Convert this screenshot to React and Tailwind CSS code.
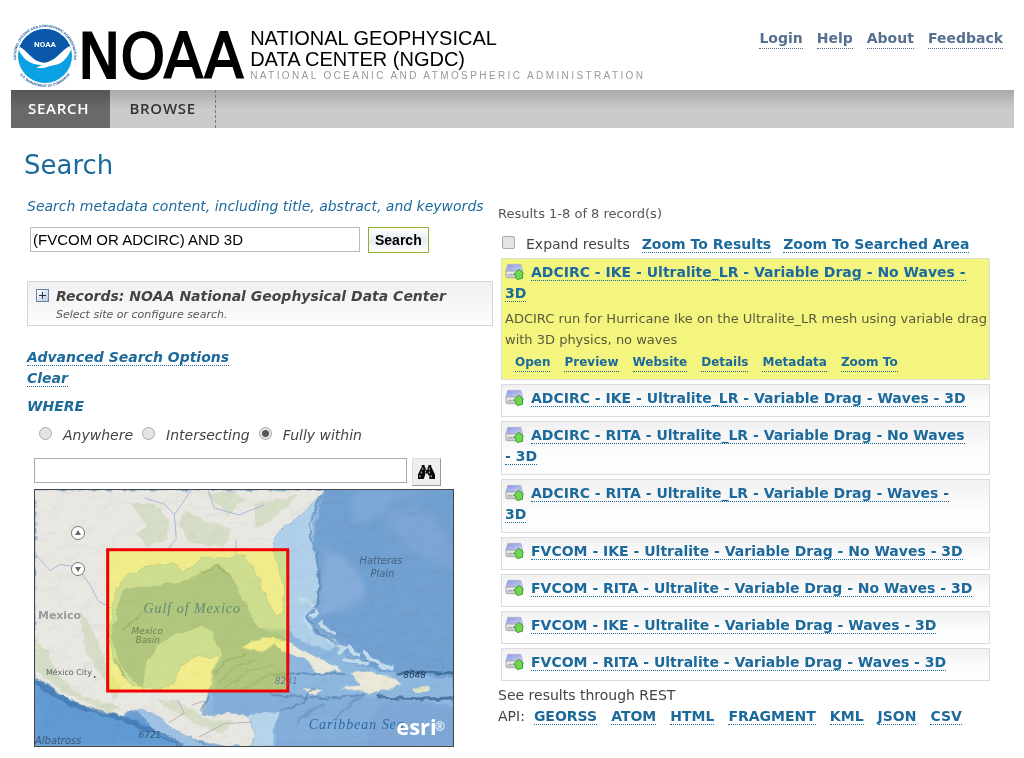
import React, { useState } from "react";

const results = [
  {
    title: "ADCIRC - IKE - Ultralite_LR - Variable Drag - No Waves - 3D",
    description:
      "ADCIRC run for Hurricane Ike on the Ultralite_LR mesh using variable drag with 3D physics, no waves",
    selected: true,
  },
  { title: "ADCIRC - IKE - Ultralite_LR - Variable Drag - Waves - 3D" },
  { title: "ADCIRC - RITA - Ultralite_LR - Variable Drag - No Waves - 3D" },
  { title: "ADCIRC - RITA - Ultralite_LR - Variable Drag - Waves - 3D" },
  { title: "FVCOM - IKE - Ultralite - Variable Drag - No Waves - 3D" },
  { title: "FVCOM - RITA - Ultralite - Variable Drag - No Waves - 3D" },
  { title: "FVCOM - IKE - Ultralite - Variable Drag - Waves - 3D" },
  { title: "FVCOM - RITA - Ultralite - Variable Drag - Waves - 3D" },
];

const recordActions = ["Open", "Preview", "Website", "Details", "Metadata", "Zoom To"];
const apiFormats = ["GEORSS", "ATOM", "HTML", "FRAGMENT", "KML", "JSON", "CSV"];
const whereOptions = ["Anywhere", "Intersecting", "Fully within"];

function Link({ children, className = "" }) {
  return (
    <a href="#" className={`border-b border-dotted border-[#1c6a9c] font-bold text-[#1c6a9c] ${className}`}>
      {children}
    </a>
  );
}

function NoaaSeal() {
  return (
    <svg viewBox="0 0 64 64" className="size-16 shrink-0" role="img" aria-label="NOAA seal">
      <defs>
        <path id="ringTop" d="M4.7 41.9 A29 29 0 1 1 59.3 41.9" />
        <path id="ringBottom" d="M7.4 50.9 A31 31 0 0 0 56.6 50.9" />
        <clipPath id="disc">
          <circle cx="32" cy="32" r="27" />
        </clipPath>
      </defs>
      <g clipPath="url(#disc)">
        <rect width="64" height="64" fill="#0aa0e4" />
        <path d="M4 4H60V24C50 28 45 38 38 40L30 41C21 38 17 29 5 23Z" fill="#0a56a8" />
        <path
          d="M4 22C14 25 18 36 27 38C31 39 33 39 37 37C46 34 49 24 60 21C57 30 51 40 42 41L37 42L31 44L23 44L29 41C17 41 9 35 4 22Z"
          fill="#fff"
        />
      </g>
      <text x="32" y="23" textAnchor="middle" fontSize="8" fontWeight="700" fontFamily="Roboto, sans-serif" fill="#fff">
        NOAA
      </text>
      <g fontSize="3.4" fontWeight="700" fontFamily="Liberation Sans, sans-serif" fill="#0d4f96" textAnchor="middle">
        <text>
          <textPath href="#ringTop" startOffset="50%">NATIONAL OCEANIC AND ATMOSPHERIC ADMINISTRATION</textPath>
        </text>
        <text>
          <textPath href="#ringBottom" startOffset="50%">U.S. DEPARTMENT OF COMMERCE</textPath>
        </text>
      </g>
    </svg>
  );
}

function DriveIcon() {
  return (
    <svg viewBox="0 0 20 18" className="mr-[7px] inline-block h-[18px] w-[19px] align-[-4px]" aria-hidden="true">
      <defs>
        <linearGradient id="driveTop" x1="0" y1="0" x2="1" y2="1">
          <stop offset="0" stopColor="#8e94dc" />
          <stop offset="1" stopColor="#c8d4f7" />
        </linearGradient>
        <linearGradient id="driveFront" x1="0" y1="0" x2="0" y2="1">
          <stop offset="0" stopColor="#f1f1f4" />
          <stop offset="1" stopColor="#c4c4cb" />
        </linearGradient>
      </defs>
      <path d="M3 1H16.5L18.5 8H1Z" fill="url(#driveTop)" stroke="#a9aed6" />
      <path d="M1 8H18.5V13.5Q18.5 15 17 15H2.5Q1 15 1 13.5Z" fill="url(#driveFront)" stroke="#a4a4ac" />
      <path d="M3 12H8" stroke="#999" />
      <path d="M14.5 6L19.5 10.5L18.5 11.5V15.5L13 17L11.5 15.5V12.5L9 11.5Z" fill="#72d650" stroke="#2f9a2c" />
    </svg>
  );
}

function BinocularsIcon() {
  return (
    <svg viewBox="0 0 20 18" className="h-[17px] w-[19px]" aria-hidden="true">
      <path
        d="M5 1H8V3L9 4V6H11V4L12 3V1H15V3L17 7L19 11V16H13V12H11.5V10H8.5V12L7 16H1V11L3 7L5 3Z"
        fill="#080808"
      />
      <path d="M6 4V6M4.5 8V10M3 12V14M9 7V9M13 4V6M13 8V10M15 12V14" stroke="#ddd" />
    </svg>
  );
}

const mainland =
  "M0 0H291L286 8L270 23L253 36L239 48L238 60L246 80L251 106L249 124L243 128L233 110L226 93L219 77L211 66L193 68L166 69L159 78L149 80L139 74L113 76L93 86L82 96L78 119L75 143L79 173L96 196L123 201L139 196L146 176L163 166L183 168L179 186L173 203L168 226L185 225L208 224L216 232L220 245L218 257H183L169 253L149 246L133 236L120 226L106 219L89 226L63 223L39 213L16 198L0 189Z";

function GulfMap() {
  return (
    <svg viewBox="0 0 420 257" className="block w-full" role="img" aria-label="Map of the Gulf of Mexico">
      <defs>
        <filter id="coast" x="-5%" y="-5%" width="110%" height="110%">
          <feTurbulence type="fractalNoise" baseFrequency="0.09" numOctaves="3" seed="4" />
          <feDisplacementMap in="SourceGraphic" scale="7" xChannelSelector="R" yChannelSelector="G" />
        </filter>
        <filter id="relief" x="0" y="0" width="100%" height="100%">
          <feTurbulence type="fractalNoise" baseFrequency="0.05 0.08" numOctaves="4" seed="9" />
          <feDiffuseLighting surfaceScale="3" lightingColor="#fff">
            <feDistantLight azimuth="225" elevation="72" />
          </feDiffuseLighting>
        </filter>
        <filter id="soft">
          <feGaussianBlur stdDeviation="3" />
        </filter>
      </defs>
      <rect width="420" height="257" fill="#71a1d2" />
      <g filter="url(#soft)">
        <path d="M285 0C265 40 290 90 278 130L350 190H420V257H175L150 130L230 60Z" fill="#85afdb" />
        <path d="M290 60C315 65 335 90 330 110C310 125 295 120 285 130Z" fill="#87aedb" />
        <path d="M325 0C305 30 325 50 360 10L400 0Z" fill="#7ea9d7" />
        <path d="M350 25C390 10 420 30 420 80L375 60Z" fill="#7ea6d5" />
        <path d="M345 215C370 208 420 212 420 225V257H330Z" fill="#80a8d7" />
        <path d="M0 193C40 215 90 230 120 232L160 257H0Z" fill="#609bd5" />
      </g>
      <g filter="url(#coast)">
        <path
          d="M291 0C285 20 278 40 283 72L286 80L285 115L276 126L286 145L303 154L318 175L365 185L420 190V216L360 210L320 207L280 208L235 200L180 203L180 230L240 225L242 257H180L160 225L120 200L70 180L70 70L220 50L260 0Z"
          fill="#8fb8e0"
        />
        <path
          d="M291 0C284 18 273 24 283 70L284 80L286 93L285 110L276 124L272 130L279 141L292 149L302 158L294 160L270 154L255 140L210 140L185 170L170 210L90 205L70 180V75L100 62L220 50L260 0Z"
          fill="#b1d1ea"
        />
        <path
          d="M100 98C120 95 150 95 165 84L184 75C192 80 202 90 207 106C220 125 217 145 245 143L255 152V202H182L177 184L187 166L178 142C160 132 145 145 125 154L112 175L108 198C90 190 76 160 77 140C85 125 82 108 90 100Z"
          fill="#82abcc"
        />
        <path d="M100 217C120 218 145 240 170 257H145L120 242Z" fill="#9ec2e4" />
        <path d="M205 229C220 222 240 225 247 222C240 235 237 248 240 257H205Z" fill="#b7d6ec" />
        <path d={mainland} fill="#eae8e3" stroke="#9ebfd5" />
        <g fill="#cfdabd" opacity=".7">
          <path d="M95 12L120 14L135 30L132 48L112 57L100 45L112 35Z" />
          <path d="M150 20L175 32L198 40L188 58L155 52L145 38Z" />
          <path d="M173 5L200 0L212 10L194 25Z" />
          <path d="M220 15L265 5L238 30L222 40Z" />
          <path d="M45 120L55 135L64 155L72 178L87 200L78 210L65 182L50 160Z" />
          <path d="M0 150L13 162L22 185L45 205L85 218L76 224L30 204L0 182Z" />
          <path d="M120 210L150 215L170 230L199 232L190 245L160 235Z" />
        </g>
        <path d="M208 159L219 151L236 148L253 151L266 159L283 168L306 178L308 183L281 183L276 174L259 166L239 156L223 163Z" fill="#ece9dd" stroke="#a3c6dd" />
        <path d="M318 184L339 183L356 188L369 196L353 201L338 205L306 199L326 196Z" fill="#ece9d9" stroke="#a3c6dd" />
        <path d="M269 199L288 201L281 207Z" fill="#ece9d9" />
        <ellipse cx="388" cy="201" rx="8" ry="3" fill="#dfe5c8" />
        <path d="M265 110L276 112L282 122L278 127M272 130L277 144M286 131L291 139L302 144M292 149L310 159L305 166M313 156L325 167M310 170L335 174M330 163L345 174L359 180" fill="none" stroke="#c2dcec" strokeWidth="4" />
        <path d="M288 5L275 35L283 70L287 92L285 112L274 128L287 145L305 156M240 187L275 184L311 185M238 206L290 210L330 206" fill="none" stroke="#4f7eaf" strokeWidth="2" opacity=".6" />
        <path d="M0 192L38 216L90 230L130 247L147 257" fill="none" stroke="#336aa5" strokeWidth="5" opacity=".55" />
        <path d="M361 186L378 182L420 185M345 208L390 210L420 209" fill="none" stroke="#315f8c" strokeWidth="3" opacity=".7" />
        <path d="M80 169L91 190M88 142L108 123M168 83L182 76L197 88M182 186L190 173L215 164M174 208L166 222M245 223L270 213L279 199" fill="none" stroke="#4d7896" strokeWidth="2" opacity=".5" />
        <path d="M185 195L200 178L222 170M190 200L214 182L240 176M207 201L228 188L250 184M300 232L318 212L328 208M262 235L276 222L290 214" fill="none" stroke="#4d7896" strokeWidth="2" opacity=".35" />
      </g>
      <g fill="none" stroke="#a4bcde" strokeWidth="1">
        <path d="M0 64L15 81L25 75L42 77L55 95L64 112L78 119" />
        <path d="M157 0L140 25L142 49L133 60M140 25L130 14L110 8M174 0L180 18L205 25L230 15M202 50V66" />
      </g>
      <path d="M143 211L150 224L134 234M158 216L170 212L173 226M165 248L190 235L218 233" fill="none" stroke="#b8b3bc" />
      <rect width="420" height="257" filter="url(#relief)" opacity=".24" className="mix-blend-multiply" />

      <rect x="73" y="60" width="181" height="142" fill="#fff500" fillOpacity=".38" stroke="#f00000" strokeWidth="3" />
      <g fontFamily="DejaVu Sans, sans-serif" fontSize="9" fill="#59616b">
        <text x="3" y="130" fontSize="11" fontWeight="700" fill="#9a9a9a">Mexico</text>
        <text x="11" y="186" fontSize="8">México City</text>
        <circle cx="60" cy="188" r="1" />
        <g fontStyle="italic">
          <text x="97" y="145" fill="#70804f">Mexico</text>
          <text x="101" y="154" fill="#70804f">Basin</text>
          <text x="326" y="74" fontSize="10" fill="#44617f">Hatteras</text>
          <text x="337" y="87" fontSize="10" fill="#44617f">Plain</text>
          <text x="0" y="255" fontSize="10" fill="#3c5976">Albatross</text>
          <text x="104" y="249" fill="#3c5976">6721</text>
          <text x="241" y="195" fill="#65779b">8231</text>
          <text x="370" y="189" fill="#223b5a">8648</text>
        </g>
      </g>
      <g fontFamily="Liberation Serif, serif" fontStyle="italic" fontSize="14">
        <text x="109" y="124" fill="#5d8a72" letterSpacing="1">Gulf of Mexico</text>
        <text x="275" y="240" fill="#2969a8" letterSpacing="1">Caribbean Sea</text>
      </g>
      <text x="363" y="246" fontFamily="Open Sans, sans-serif" fontSize="22" fontWeight="700" fill="#fff">esri</text>
      <text x="402" y="242" fontFamily="Open Sans, sans-serif" fontSize="12" fill="#fff">®</text>
    </svg>
  );
}

function MapPanel() {
  return (
    <div className="relative mt-[3px] ml-[7px] max-w-[420px] border border-[#444] not-italic">
      <GulfMap />
      <div className="absolute top-9 left-9 flex flex-col gap-[22px]">
        {["up", "down"].map((dir) => (
          <button
            key={dir}
            aria-label={`Pan ${dir}`}
            className="flex size-[14px] items-center justify-center rounded-full border border-[#777] bg-white"
          >
            <svg viewBox="0 0 6 6" className="size-[6px]">
              <path d={dir === "up" ? "M0 5H6L3 0Z" : "M0 1H6L3 6Z"} fill="#666" />
            </svg>
          </button>
        ))}
      </div>
    </div>
  );
}

function ResultItem({ item }) {
  return (
    <li
      className={`border border-[#dcdcdc] pt-[3px] pb-[7px] pl-[3px] ${
        item.selected ? "bg-[#f3f57f]" : "bg-linear-to-b from-[#f0f0f0] to-[#fdfdfd] to-60%"
      }`}
    >
      <div className="pr-4 text-sm leading-[21px]">
        <DriveIcon />
        <Link>{item.title}</Link>
      </div>
      {item.description && (
        <>
          <p className="mt-1 text-[13px] leading-[21px] text-[#5a5a3c]">{item.description}</p>
          <div className="mt-[3px] flex gap-[14px] pl-[10px] text-xs leading-[18px]">
            {recordActions.map((action) => (
              <Link key={action}>{action}</Link>
            ))}
          </div>
        </>
      )}
    </li>
  );
}

export default function App() {
  const [query, setQuery] = useState("(FVCOM OR ADCIRC) AND 3D");
  const [where, setWhere] = useState("Fully within");
  const [place, setPlace] = useState("");
  const [expanded, setExpanded] = useState(false);

  return (
    <div className="bg-white px-[11px] pr-[10px] font-['DejaVu_Sans',Verdana,sans-serif] text-sm text-[#444]">
      <header className="flex h-[90px] items-start justify-between">
        <div className="flex items-start pt-6 pl-[2px] font-['Liberation_Sans',Arial,sans-serif] text-black">
          <NoaaSeal />
          <div className="flex h-16 items-center pl-px font-['DejaVu_Sans_Condensed','DejaVu_Sans',sans-serif] text-[63px] leading-none [-webkit-text-stroke:2px_black]">
            NOAA
          </div>
          <div className="ml-[7px] pt-1 text-[20px] leading-[21px]">
            <div>NATIONAL GEOPHYSICAL</div>
            <div>DATA CENTER (NGDC)</div>
            <div className="text-[10px] leading-3 tracking-[0.24em] text-[#999]">
              NATIONAL OCEANIC AND ATMOSPHERIC ADMINISTRATION
            </div>
          </div>
        </div>
        <nav className="flex gap-[14px] pt-7 pr-[11px]">
          {["Login", "Help", "About", "Feedback"].map((label) => (
            <a key={label} href="#" className="border-b border-dotted border-[#56708f] font-bold text-[#56708f]">
              {label}
            </a>
          ))}
        </nav>
      </header>

      <nav className="flex h-[38px] bg-linear-to-b from-[#a9a9a9] to-[#cbcbcb] to-50% font-['Open_Sans',sans-serif] text-[15px] font-semibold tracking-wider">
        <a href="#" className="flex items-center bg-linear-to-b from-[#555] to-[#696969] to-50% pr-[21px] pl-[17px] text-white">
          SEARCH
        </a>
        <a href="#" className="flex items-center border-r border-dashed border-[#777] px-[19px] text-[#333]">
          BROWSE
        </a>
      </nav>

      <main className="grid grid-cols-[466fr_492fr] gap-[5px] pr-6 pl-4">
        <section className="italic">
          <h1 className="-ml-[3px] pt-[21px] text-[26px] leading-8 text-[#1c6a9c] not-italic">Search</h1>
          <label htmlFor="query" className="mt-[15px] block leading-5 whitespace-nowrap text-[#1c6a9c]">
            Search metadata content, including title, abstract, and keywords
          </label>
          <div className="mt-[11px] ml-[3px] flex gap-2 font-['Liberation_Sans',Arial,sans-serif] text-black not-italic">
            <input
              id="query"
              value={query}
              onChange={(e) => setQuery(e.target.value)}
              className="h-[25px] w-[330px] border border-[#bbb] bg-white px-[2px] text-[15px]"
            />
            <button className="h-[26px] border border-[#8fae3c] bg-linear-to-b from-white via-[#e9edf3] to-white px-[6px] text-sm font-bold">
              Search
            </button>
          </div>

          <div className="mt-[28px] flex h-[45px] border border-[#d6d6d6] bg-linear-to-b from-[#f0f0f0] to-[#fdfdfd] pt-1 pl-2">
            <button
              aria-label="Expand records"
              className="mt-[3px] flex size-[13px] items-center justify-center border border-[#6883a8] bg-linear-to-br from-white to-[#b9cbe4]"
            >
              <svg viewBox="0 0 7 7" className="size-[7px]">
                <path d="M0 3.5H7M3.5 0V7" stroke="#234" />
              </svg>
            </button>
            <div className="pl-[7px]">
              <div className="leading-5 font-bold">Records: NOAA National Geophysical Data Center</div>
              <div className="text-[11px] leading-[18px] text-[#555]">Select site or configure search.</div>
            </div>
          </div>

          <div className="mt-[21px] flex flex-col items-start leading-[21px]">
            <div><Link>Advanced Search Options</Link></div>
            <div><Link>Clear</Link></div>
          </div>
          <h2 className="mt-[7px] leading-[21px] font-bold text-[#1c6a9c]">WHERE</h2>
          <div className="mt-2 flex gap-[9px] pl-3 leading-[21px]">
            {whereOptions.map((option) => (
              <label key={option} className="flex items-start gap-[11px]">
                <input
                  type="radio"
                  name="where"
                  checked={where === option}
                  onChange={() => setWhere(option)}
                  className="mt-[2px] size-[13px] appearance-none rounded-full border border-[#aaa] bg-[#e4e4e4] checked:bg-[radial-gradient(circle,#555_0_3px,#e4e4e4_4px)]"
                />
                {option}
              </label>
            ))}
          </div>
          <div className="mt-3 ml-[7px] flex gap-[5px]">
            <input
              aria-label="Place"
              value={place}
              onChange={(e) => setPlace(e.target.value)}
              className="h-[25px] w-[373px] border border-[#aaa] bg-white px-1"
            />
            <button
              aria-label="Find place"
              className="flex h-7 w-[29px] items-center justify-center border border-[#ddd] border-r-[#999] border-b-[#999] bg-[#eee]"
            >
              <BinocularsIcon />
            </button>
          </div>
          <MapPanel />
        </section>

        <section className="pt-[75px]">
          <div className="text-[13px] leading-[21px] text-[#555]">Results 1-8 of 8 record(s)</div>
          <div className="mt-[10px] flex items-center gap-3 pl-1 leading-[21px]">
            <label className="flex items-start gap-[11px]">
              <input
                type="checkbox"
                checked={expanded}
                onChange={(e) => setExpanded(e.target.checked)}
                className="mt-[2px] size-[13px] appearance-none rounded-xs border border-[#aaa] bg-[#e4e4e4]"
              />
              Expand results
            </label>
            <div><Link>Zoom To Results</Link></div>
            <div><Link>Zoom To Searched Area</Link></div>
          </div>
          <ul className="mt-[3px] ml-[3px] flex flex-col gap-1">
            {results.map((item) => (
              <ResultItem key={item.title} item={item} />
            ))}
          </ul>
          <div className="mt-1 leading-[21px]">
            <div>See results through REST</div>
            <div className="flex gap-[14px]">
              <span className="-mr-[5px]">API:</span>
              {apiFormats.map((format) => (
                <div key={format}><Link>{format}</Link></div>
              ))}
            </div>
          </div>
        </section>
      </main>
    </div>
  );
}
